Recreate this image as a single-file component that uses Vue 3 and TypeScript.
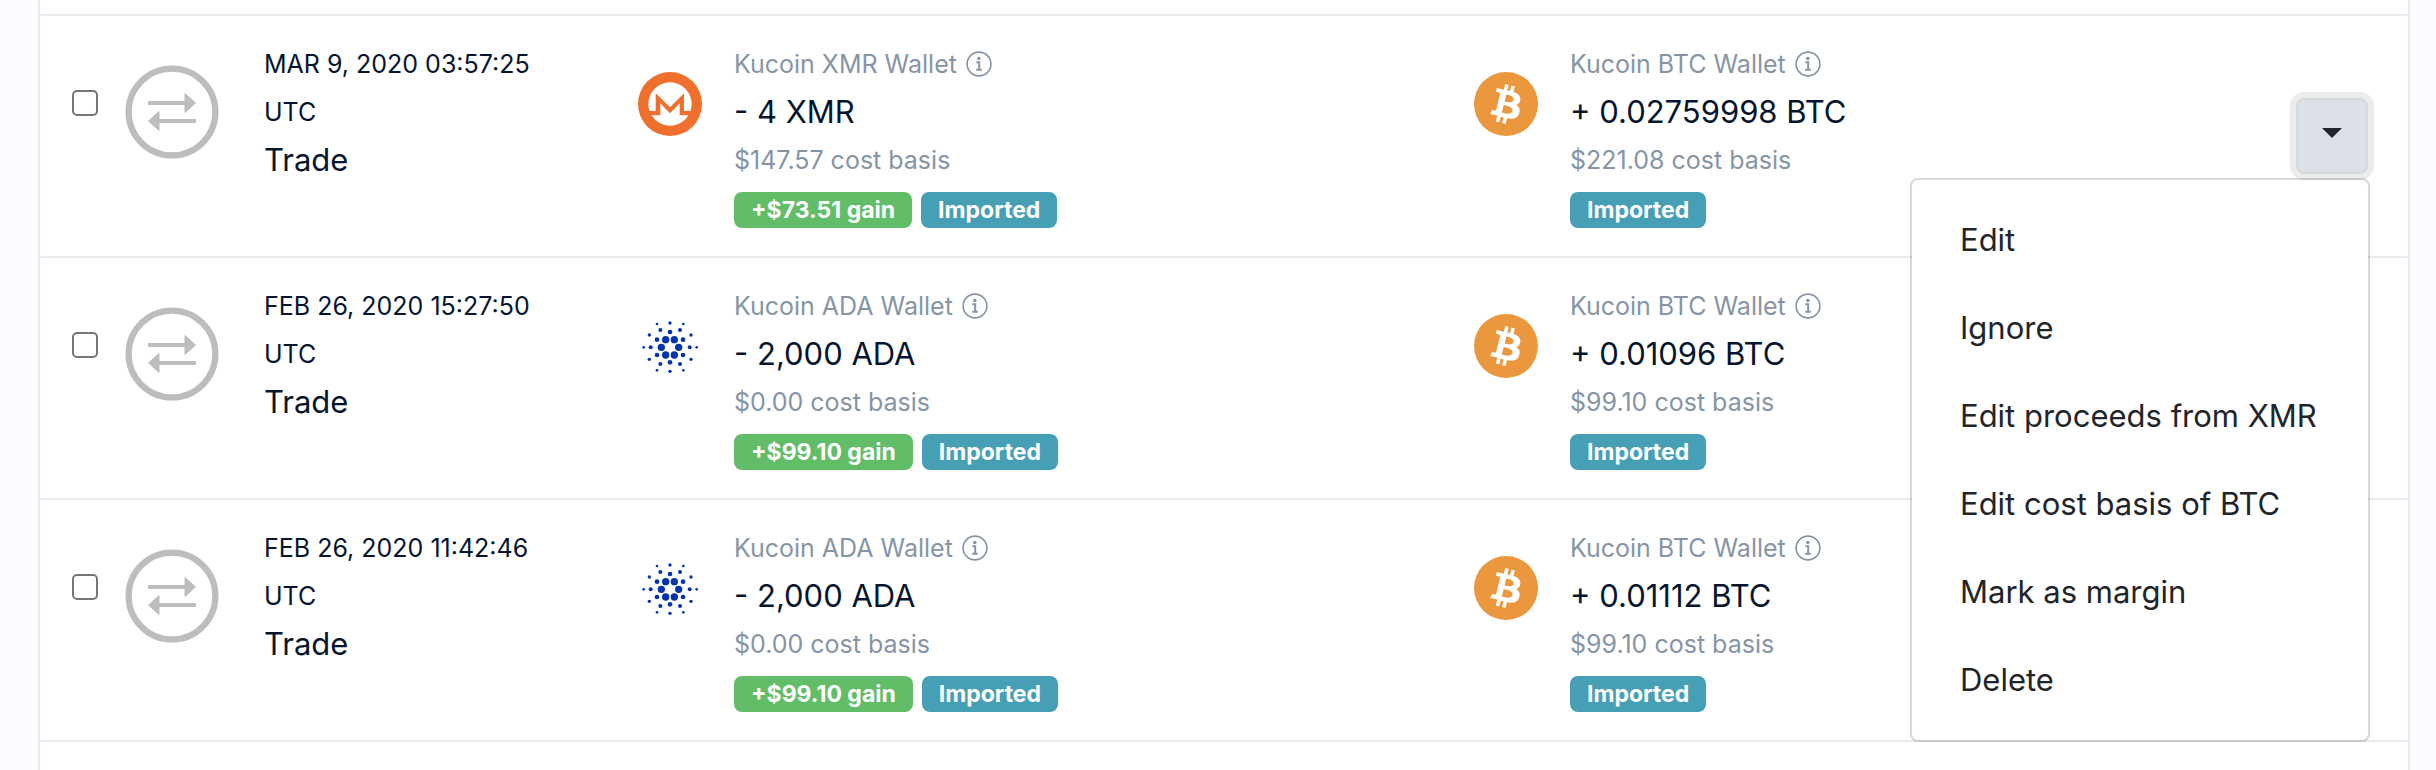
<script setup lang="ts">
import { ref } from 'vue'

type Coin = 'XMR' | 'ADA' | 'BTC'

interface Side {
  coin: Coin
  amount: string
  basis: string
  gain?: string
}

interface Transaction {
  id: number
  date: string
  sent: Side
  received: Side
}

const transactions: Transaction[] = [
  {
    id: 1,
    date: 'MAR 9, 2020 03:57:25',
    sent: { coin: 'XMR', amount: '- 4', basis: '$147.57', gain: '+$73.51' },
    received: { coin: 'BTC', amount: '+ 0.02759998', basis: '$221.08' },
  },
  {
    id: 2,
    date: 'FEB 26, 2020 15:27:50',
    sent: { coin: 'ADA', amount: '- 2,000', basis: '$0.00', gain: '+$99.10' },
    received: { coin: 'BTC', amount: '+ 0.01096', basis: '$99.10' },
  },
  {
    id: 3,
    date: 'FEB 26, 2020 11:42:46',
    sent: { coin: 'ADA', amount: '- 2,000', basis: '$0.00', gain: '+$99.10' },
    received: { coin: 'BTC', amount: '+ 0.01112', basis: '$99.10' },
  },
]

const selected = ref<number[]>([])
const openMenu = ref<number | null>(1)

const menuItems = (t: Transaction): string[] => [
  'Edit',
  'Ignore',
  `Edit proceeds from ${t.sent.coin}`,
  `Edit cost basis of ${t.received.coin}`,
  'Mark as margin',
  'Delete',
]

// Cardano mark: rings of dots as [x, y, radius]
const adaDots: [number, number, number][] = [
  [137, 119, 11], [163, 119, 11], [124, 142, 11], [176, 142, 11], [137, 165, 11], [163, 165, 11],
  [150, 96, 7], [150, 187, 7], [111, 119, 7], [189, 119, 7], [111, 165, 7], [189, 165, 7],
  [121, 90, 6], [180, 90, 6], [92, 142, 6], [209, 142, 6], [121, 192, 6], [180, 192, 6],
  [88, 105, 5], [213, 105, 5], [88, 178, 5], [213, 178, 5], [150, 69, 5], [150, 214, 5],
  [111, 72, 4], [190, 72, 4], [71, 142, 4], [230, 142, 4], [111, 211, 4], [190, 211, 4],
]
</script>

<template>
  <main class="sheet">
    <ul class="rows">
      <li v-for="t in transactions" :key="t.id" class="row">
        <input v-model="selected" class="check" type="checkbox" :value="t.id" :aria-label="`Select ${t.date}`" />

        <svg class="kind" viewBox="0 0 94 94" aria-hidden="true">
          <circle cx="47" cy="47" r="43.4" fill="none" stroke="#bdbdbd" stroke-width="6.2" />
          <g fill="#bdbdbd" stroke="#bdbdbd" stroke-linejoin="round">
            <path d="M23.5 36.5H60V28.5L70.5 38L60 47.5V39.5H23.5Z" />
            <path d="M70.5 54.5H34V46.5L23.5 56L34 65.5V57.5H70.5Z" />
          </g>
        </svg>

        <div class="when">
          <div class="date">{{ t.date }}</div>
          <div class="date">UTC</div>
          <div class="main">Trade</div>
        </div>

        <section v-for="(side, i) in [t.sent, t.received]" :key="i" class="side">
          <svg v-if="side.coin === 'XMR'" class="coin" viewBox="0 0 64 64" aria-hidden="true">
            <circle cx="32" cy="32" r="32" fill="#f06f2d" />
            <circle cx="32" cy="32" r="21.7" fill="#fff" />
            <path
              fill="#f06f2d"
              d="M10 39H17.7V21.3L32 35.3L46 21.3V39H54L51.5 43.3H41.7V31.3L32 41.3L22.3 31.3V43.3H12.5Z"
            />
          </svg>
          <svg v-else-if="side.coin === 'ADA'" class="coin" viewBox="54 42 192 192" aria-hidden="true">
            <circle v-for="(d, n) in adaDots" :key="n" :cx="d[0]" :cy="d[1]" :r="d[2]" fill="#0033ad" />
          </svg>
          <svg v-else class="coin" viewBox="0 0 32 32" aria-hidden="true">
            <circle cx="16" cy="16" r="16" fill="#ea973d" />
            <path
              fill="#fff"
              d="M23.189 14.02c.314-2.096-1.283-3.223-3.465-3.975l.708-2.84-1.728-.43-.69 2.765c-.454-.114-.92-.22-1.385-.326l.695-2.783L15.596 6l-.708 2.839c-.376-.086-.746-.17-1.104-.26l.002-.009-2.384-.595-.46 1.846s1.283.294 1.256.312c.7.175.826.638.805 1.006l-.806 3.235c.048.012.11.03.18.057l-.183-.045-1.13 4.532c-.086.212-.303.531-.793.41.018.025-1.256-.313-1.256-.313l-.858 1.978 2.25.561c.418.105.828.215 1.231.318l-.715 2.872 1.727.43.708-2.84c.472.127.93.245 1.378.357l-.706 2.828 1.728.43.715-2.866c2.948.558 5.164.333 6.097-2.333.752-2.146-.037-3.385-1.588-4.192 1.13-.26 1.98-1.003 2.207-2.538zm-3.95 5.538c-.533 2.147-4.148.986-5.32.695l.95-3.805c1.172.293 4.929.872 4.37 3.11zm.535-5.569c-.487 1.953-3.495.96-4.47.717l.86-3.45c.975.243 4.118.696 3.61 2.733z"
            />
          </svg>
          <div class="details">
            <div class="wallet">
              <span>Kucoin {{ side.coin }} Wallet</span>
              <svg class="info" viewBox="0 0 26 26" aria-hidden="true">
                <circle cx="13" cy="13" r="11.9" fill="none" stroke="#8595a6" stroke-width="1.6" />
                <circle cx="12.8" cy="7.5" r="1.8" fill="#8595a6" />
                <path d="M10.4 11.3H13.2V18.6M10.2 18.8H15.8" fill="none" stroke="#8595a6" stroke-width="2" />
              </svg>
            </div>
            <div class="main">{{ side.amount }} {{ side.coin }}</div>
            <div class="basis">{{ side.basis }} cost basis</div>
            <div class="badges">
              <span v-if="side.gain" class="badge gain">{{ side.gain }} gain</span>
              <span class="badge imported">Imported</span>
            </div>
          </div>
        </section>

        <div class="actions">
          <template v-if="openMenu === t.id">
            <button class="toggle" type="button" aria-label="Actions" aria-haspopup="menu" aria-expanded="true">
              <svg class="caret" viewBox="0 0 20 10" aria-hidden="true"><path d="M0 0H20L10 10Z" fill="#212529" /></svg>
            </button>
            <div class="menu" role="menu">
              <button v-for="item in menuItems(t)" :key="item" class="item" type="button" role="menuitem">{{ item }}</button>
            </div>
          </template>
        </div>
      </li>
    </ul>
  </main>
</template>

<style>
body {
  margin: 0;
  background: #fbfcff;
}
</style>

<style scoped>
.sheet {
  box-sizing: border-box;
  min-height: 100vh;
  margin: 0 26px 0 38px;
  padding-top: 14px;
  border: solid #e9ecf1;
  border-width: 0 2px;
  background: #fff;
  color: #06152e;
  font-family: Inter, 'Liberation Sans', sans-serif;
  font-size: 25px;
  line-height: 48px;
}

.rows {
  margin: 0;
  padding: 0;
  border-top: 2px solid #e7ebef;
  list-style: none;
}

.row {
  display: grid;
  grid-template-columns: 53px 139px 374fr 836fr 822fr 72px;
  align-items: start;
  padding: 24px 40px 28px 32px;
  border-bottom: 2px solid #e7ebef;
}

.check {
  appearance: none;
  box-sizing: border-box;
  width: 26px;
  height: 26px;
  margin: 50px 0 0;
  border: 2px solid #767676;
  border-radius: 5px;
  background: #fff;
}

.check:checked {
  background: #767676;
}

.kind {
  width: 94px;
  height: 94px;
  margin-top: 25px;
}

.when,
.details {
  white-space: nowrap;
}

.main {
  font-size: 31px;
}

.side {
  display: flex;
  gap: 32px;
}

.coin {
  flex: none;
  width: 64px;
  height: 64px;
  margin-top: 32px;
}

.wallet,
.basis {
  color: #8595a6;
}

.wallet {
  display: flex;
  align-items: center;
  gap: 9px;
}

.info {
  width: 26px;
  height: 26px;
}

.badges {
  display: flex;
  gap: 9px;
  margin-top: 8px;
}

.badge {
  padding: 0 17px;
  border-radius: 8px;
  color: #fff;
  font-size: 23px;
  font-weight: 700;
  line-height: 36px;
}

.gain {
  background: #62bd69;
}

.imported {
  background: #479fb5;
}

.actions {
  position: relative;
  margin-top: 58px;
}

.toggle {
  display: flex;
  box-sizing: border-box;
  align-items: center;
  justify-content: center;
  width: 72px;
  height: 76px;
  padding: 0 0 6px;
  border: 2px solid #d3d9df;
  border-radius: 8px;
  background: #dae0e5;
  box-shadow: 0 0 0 6px #ececec;
}

.caret {
  width: 20px;
  height: 10px;
}

.menu {
  position: absolute;
  z-index: 1;
  top: 80px;
  right: -2px;
  box-sizing: border-box;
  min-width: 460px;
  padding: 16px 0;
  border: 2px solid rgba(0, 0, 0, 0.15);
  border-radius: 8px;
  background: #fff;
  background-clip: padding-box;
}

.item {
  display: block;
  width: 100%;
  padding: 20px 48px;
  border: 0;
  background: none;
  color: #212529;
  font: inherit;
  font-size: 31px;
  line-height: 48px;
  text-align: left;
  white-space: nowrap;
}
</style>
